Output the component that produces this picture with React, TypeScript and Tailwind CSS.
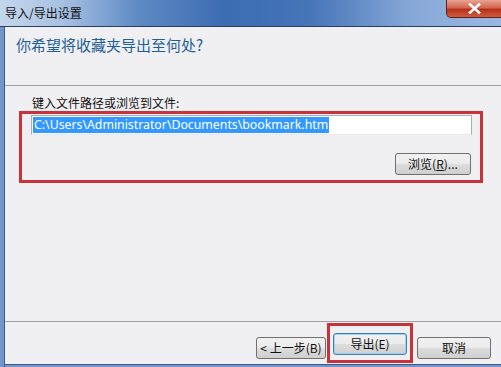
import React from "react";

const cjk = "font-['Noto_Sans_CJK_SC',sans-serif]";

const WinButton: React.FC<{
  label: React.ReactNode;
  width: string;
  isDefault?: boolean;
}> = ({ label, width, isDefault = false }) => (
  <button
    type="button"
    className={`${width} h-[22px] rounded-[3px] border ${
      isDefault ? "border-[#3c7fb1] shadow-[inset_0_0_0_1px_#9ed4f3]" : "border-[#707070]"
    } bg-[linear-gradient(to_bottom,#f2f2f2_0%,#ebebeb_48%,#dddddd_52%,#cfcfcf_100%)] text-[12px] leading-none text-[#111] flex items-center justify-center ${cjk}`}
  >
    {label}
  </button>
);

const App: React.FC = () => {
  return (
    <div className="w-[501px] h-[367px] flex flex-col overflow-hidden bg-[#f0eff2]">
      {/* title bar */}
      <div className="h-[27px] shrink-0 flex items-start justify-between border-b border-[#2b3f5c] bg-[linear-gradient(to_right,#c4d6ec_0%,#a9c2e3_12%,#5d89c4_28%,#3c6cb1_45%,#4675b8_62%,#86a8d8_82%,#9ab7df_100%)]">
        <span className={`pl-[5px] pt-[5px] text-[12px] leading-[15px] text-[#111] ${cjk}`}>
          导入/导出设置
        </span>
        <div className="w-[56px] h-[18px] mr-[-1px] rounded-bl-[5px] border border-t-0 border-[#5a2320] bg-[linear-gradient(to_bottom,#e8a493_0%,#d2674f_45%,#b8301c_55%,#cf5a3c_100%)] flex items-center justify-center">
          <svg width="13" height="11" viewBox="0 0 13 11">
            <path
              d="M2 1.5 L11 9.5 M11 1.5 L2 9.5"
              stroke="#fff"
              strokeWidth="2.6"
              strokeLinecap="square"
            />
          </svg>
        </div>
      </div>

      <div className="flex-1 flex">
        {/* left frame */}
        <div className="w-[5px] shrink-0 bg-[#7096cb] border-r border-[#3d5a86]" />

        <div className="flex-1 flex flex-col">
          {/* header */}
          <div className="h-[59px] shrink-0 border-b border-[#a0a0a0] pl-[11px] pt-[8px]">
            <p className={`text-[15px] leading-[20px] text-[#1e5f95] ${cjk}`}>
              你希望将收藏夹导出至何处?
            </p>
          </div>

          {/* content */}
          <div className="h-[235px] shrink-0 pt-[10px] pl-[14px]">
            <p className={`pl-[13px] text-[12px] leading-[14px] text-[#111] ${cjk}`}>
              键入文件路径或浏览到文件:
            </p>
            <div className="mt-[1px] w-[464px] h-[72px] border-[3px] border-[#c8323a] flex flex-col pl-[9px] pr-[8px] pt-[1px]">
              <div className="h-[20px] w-[441px] border border-[#abadb3] border-b-[#e3e9ef] bg-white flex items-center pl-[1px]">
                <span className="bg-[#3399ff] text-white text-[12.3px] leading-[16px] px-[1px] font-['Noto_Sans',sans-serif] whitespace-nowrap">
                  C:\Users\Administrator\Documents\bookmark.htm
                </span>
              </div>
              <div className="flex justify-end mt-[18px] pr-[1px]">
                <WinButton
                  width="w-[76px]"
                  label={
                    <>
                      浏览(<span className="underline">R</span>)...
                    </>
                  }
                />
              </div>
            </div>
          </div>

          {/* footer */}
          <div className="flex-1 border-t border-[#a0a0a0] flex justify-end items-start pr-[10px] pt-[1px] relative">
            <div className="flex items-center mt-[10px]">
              <WinButton width="w-[70px]" label="< 上一步(B)" />
              <div className="ml-[1px] p-[3px] border-[3px] border-[#c8323a] -mt-[10px] pt-[7px] pb-[5px]">
                <WinButton width="w-[74px]" label="导出(E)" isDefault />
              </div>
              <div className="ml-[4px]">
                <WinButton width="w-[74px]" label="取消" />
              </div>
            </div>
          </div>

          {/* bottom frame */}
          <div className="h-[3px] shrink-0 bg-[#7096cb] border-t border-[#3d5a86]" />
        </div>
      </div>
    </div>
  );
};

export default App;
